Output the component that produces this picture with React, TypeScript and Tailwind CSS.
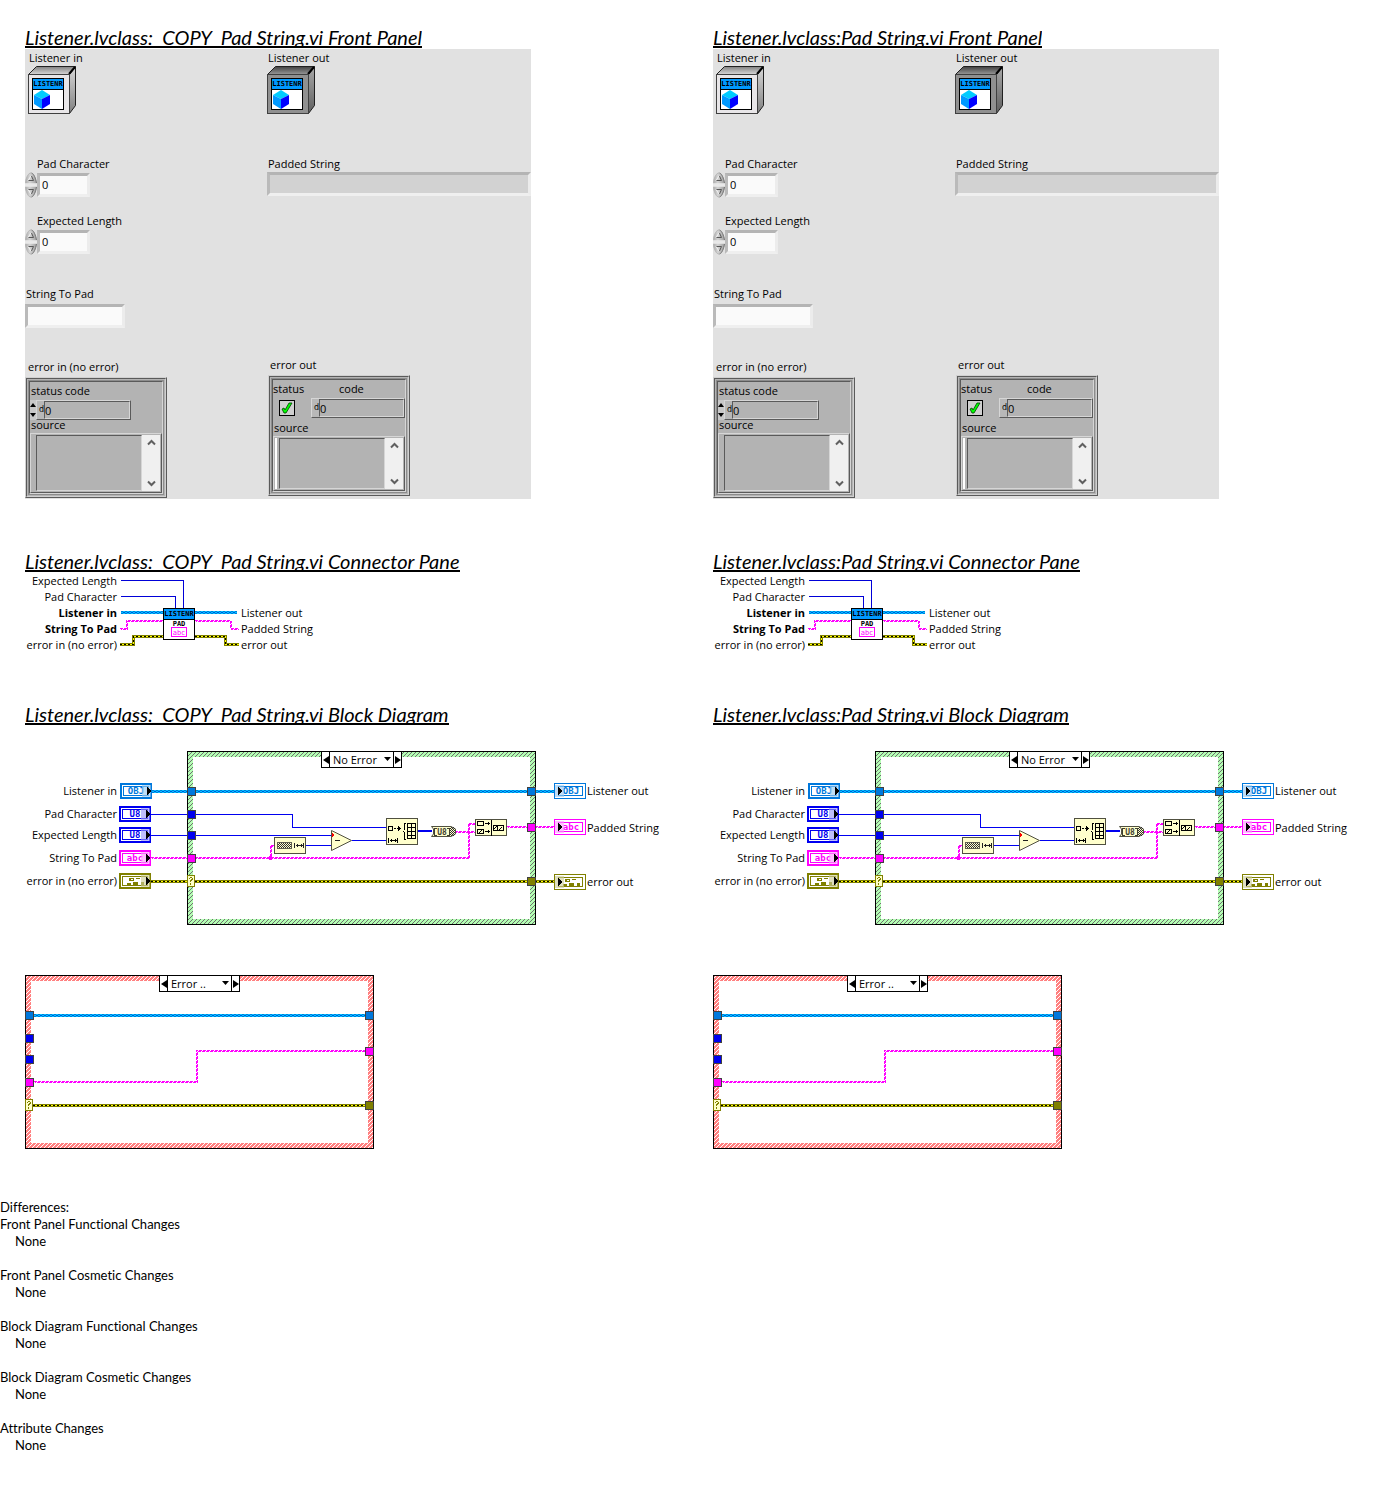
import React from "react";

const LABEL = "font-['Open_Sans',sans-serif] text-[11px] leading-4 text-black whitespace-nowrap";

function Heading({ children }: { children: string }) {
  return (
    <h2 className="flex h-[22px] w-fit items-end overflow-hidden whitespace-pre border-b-2 border-black font-[Lato,sans-serif] text-[20px] leading-[18px] italic text-black">
      {children}
    </h2>
  );
}

/* ---------- Front panel ---------- */

function Cube({ x, y }: { x: number; y: number }) {
  return (
    <g transform={`translate(${x} ${y})`}>
      <path d="M0 5L8 0L16 5L8 9Z" fill="#00ccff" />
      <path d="M0 5L8 9V19L0 14Z" fill="#0099ff" />
      <path d="M16 5L8 9V19L16 14Z" fill="#0000ff" />
    </g>
  );
}

function ClassIcon({ dark }: { dark?: boolean }) {
  const id = dark ? "box-dark" : "box-light";
  return (
    <svg width="48" height="48" viewBox="0 0 48 48" aria-hidden="true">
      <defs>
        <linearGradient id={`${id}-t`} x1="0" x2="0" y1="0" y2="1">
          <stop offset="0" stopColor={dark ? "#404040" : "#808080"} />
          <stop offset="1" stopColor={dark ? "#989898" : "#d8d8d8"} />
        </linearGradient>
        <linearGradient id={`${id}-r`} x1="0" x2="0" y1="0" y2="1">
          <stop offset="0" stopColor={dark ? "#a8a8a8" : "#d8d8d8"} />
          <stop offset="1" stopColor={dark ? "#606060" : "#808080"} />
        </linearGradient>
      </defs>
      <path d="M.5 8.500L8.500 .5H47.500L41.500 8.500Z" fill={`url(#${id}-t)`} stroke="#202020" />
      <path d="M41.500 8.500L47.500 .5V39.500L41.500 47.500Z" fill={`url(#${id}-r)`} stroke="#202020" />
      <path d="M41 8L47 1" stroke="#000" strokeWidth="2" />
      <rect x=".5" y="8.500" width="41" height="39" fill={dark ? "#909090" : "#e8e6e8"} stroke="#404040" />
      <rect x="4.500" y="12.500" width="31" height="31" fill="#fff" stroke="#000" />
      <rect x="5" y="13" width="30" height="10" fill="#0099ff" />
      <path d="M5 23.500H35" stroke="#000" />
      <text x="20" y="20" textAnchor="middle" fontFamily="DejaVu Sans Mono" fontWeight="700" fontSize="7">
        LISTENR
      </text>
      <Cube x={6} y={24} />
    </svg>
  );
}

const SUNKEN =
  "border-[3px] border-t-[#b4b4b4] border-l-[#bababa] border-r-[#ececec] border-b-[#efefef] outline-none rounded-none";

function Spinner() {
  return (
    <span className="flex w-3 shrink-0 flex-col">
      {["Increment", "Decrement"].map((name, i) => (
        <button key={name} type="button" aria-label={name} className="block h-[13px] w-3">
          <svg width="12" height="13" viewBox="0 0 12 13" className={i ? "-scale-y-100" : ""}>
            <defs>
              <linearGradient id="bean">
                <stop offset="0" stopColor="#a8a8a8" />
                <stop offset=".4" stopColor="#d4d4d4" />
                <stop offset="1" stopColor="#9c9c9c" />
              </linearGradient>
            </defs>
            <path d="M0 11.500C1 5 3.500 .5 6 .5S11 5 12 11.500Z" fill="url(#bean)" />
            <path d="M.5 11C1 5 3.500 1 6 1" fill="none" stroke="#b8b8b8" />
            <path d="M6.500 1C9 2 10.500 6 11.500 11" fill="none" stroke="#787878" />
            <path d="M3 8.500L6 4" fill="none" stroke="#f4f4f4" />
            <path d="M6.500 4L8.500 8.500H3.500" fill="none" stroke="#585858" />
            <path d="M0 12H12" stroke="#f0f0f0" />
          </svg>
        </button>
      ))}
    </span>
  );
}

function NumberControl({ id, label }: { id: string; label: string }) {
  return (
    <div>
      <label htmlFor={id} className={`${LABEL} block pl-3`}>
        {label}
      </label>
      <div className="flex items-center">
        <Spinner />
        <input id={id} defaultValue="0" className={`${LABEL} ${SUNKEN} h-6 w-[53px] bg-[#fafafa] pb-0.5 pl-0.5`} />
      </div>
    </div>
  );
}

const GROOVE = "border border-t-[#5a5a5a] border-l-[#5a5a5a] border-r-[#d6d6d6] border-b-[#d6d6d6] rounded-none";
const RIDGE = "border border-t-[#d6d6d6] border-l-[#d6d6d6] border-r-[#5a5a5a] border-b-[#5a5a5a]";

function Cluster({ children }: { children: React.ReactNode }) {
  return (
    <div className="h-[121px] w-[142px] border border-t-[#d0d0d0] border-l-[#d0d0d0] border-r-[#5a5a5a] border-b-[#5a5a5a] bg-[#b3b3b3]">
      <div className="h-full border border-t-[#5a5a5a] border-l-[#5a5a5a] border-r-[#d0d0d0] border-b-[#d0d0d0] p-px">
        <div className="h-full border border-[#8c8c8c]">
          <div className={`${GROOVE} flex h-full flex-col pt-px`}>{children}</div>
        </div>
      </div>
    </div>
  );
}

function SourceBox({ id, bar }: { id: string; bar?: boolean }) {
  return (
    <div className={`${RIDGE} flex min-h-0 flex-1 p-px`}>
      <span className={bar ? "mr-0.5 w-0.5 bg-white" : "w-1"} />
      <textarea id={id} className={`${GROOVE} min-w-0 flex-1 resize-none bg-[#b3b3b3] outline-none`} />
      <div className="flex w-[18px] flex-col items-center justify-between bg-[#f0f0f0] py-1">
        <button type="button" aria-label="Scroll up">
          <svg width="9" height="7" viewBox="0 0 9 7" className="block">
            <path d="M1 5.500L4.500 2L8 5.500" fill="none" stroke="#606060" strokeWidth="2" />
          </svg>
        </button>
        <button type="button" aria-label="Scroll down">
          <svg width="9" height="7" viewBox="0 0 9 7" className="block">
            <path d="M1 1.500L4.500 5L8 1.500" fill="none" stroke="#606060" strokeWidth="2" />
          </svg>
        </button>
      </div>
    </div>
  );
}

function CodeField({ id }: { id: string }) {
  return (
    <div className={`${RIDGE} flex h-5 min-w-0 flex-1 items-center bg-[#b8b8b8]`}>
      <span className="w-[7px] shrink-0 text-right font-['DejaVu_Sans',sans-serif] text-[8px] leading-4 text-black">d</span>
      <input id={id} defaultValue="0" className={`${LABEL} ${GROOVE} h-[18px] w-full min-w-0 bg-[#b3b3b3] outline-none`} />
    </div>
  );
}

function FrontPanel({ id }: { id: string }) {
  return (
    <section className="mt-px flex min-h-[450px] w-full max-w-[506px] bg-[#e1e1e1]">
      <div className="flex w-[242px] shrink-0 flex-col">
        <div className="pl-[3px] pt-px">
          <span className={`${LABEL} block pl-px`}>Listener in</span>
          <ClassIcon />
        </div>
        <div className="mt-[42px] flex flex-col gap-[15px]">
          <NumberControl id={`${id}-pad`} label="Pad Character" />
          <NumberControl id={`${id}-len`} label="Expected Length" />
        </div>
        <div className="mt-[31px] flex flex-col">
          <label htmlFor={`${id}-str`} className={`${LABEL} pl-px`}>
            String To Pad
          </label>
          <input id={`${id}-str`} className={`${LABEL} ${SUNKEN} mt-0.5 h-6 w-[100px] bg-[#fafafa]`} />
        </div>
        <div className="mt-[31px]">
          <span className={`${LABEL} block pb-0.5 pl-[3px]`}>error in (no error)</span>
          <Cluster>
            <span className={`${LABEL} pl-px`}>status code</span>
            <div className="mt-px flex w-[101px]">
              <span className="flex w-1.5 flex-col justify-center gap-1 bg-[#c8c8c8]">
                <button type="button" aria-label="Increase code">
                  <svg width="6" height="5" viewBox="0 0 6 5" className="block">
                    <path d="M3 0L6 4H0Z" />
                  </svg>
                </button>
                <button type="button" aria-label="Decrease code">
                  <svg width="6" height="5" viewBox="0 0 6 5" className="block">
                    <path d="M3 5L6 1H0Z" />
                  </svg>
                </button>
              </span>
              <CodeField id={`${id}-code-in`} />
            </div>
            <label htmlFor={`${id}-src-in`} className={`${LABEL} -mt-[3px] h-4 pl-px`}>
              source
            </label>
            <SourceBox id={`${id}-src-in`} />
          </Cluster>
        </div>
      </div>
      <div className="flex min-w-0 flex-1 flex-col">
        <div className="pt-px">
          <span className={`${LABEL} block pl-px`}>Listener out</span>
          <ClassIcon dark />
        </div>
        <div className="mt-[42px] flex flex-col">
          <label htmlFor={`${id}-out`} className={`${LABEL} pl-px`}>
            Padded String
          </label>
          <input id={`${id}-out`} readOnly className={`${LABEL} ${SUNKEN} h-6 w-full bg-[#d2d2d2]`} />
        </div>
        <div className="mt-[161px] pl-px">
          <span className={`${LABEL} block pb-0.5 pl-0.5`}>error out</span>
          <Cluster>
            <div className="flex">
              <label htmlFor={`${id}-status`} className={`${LABEL} w-[66px]`}>
                status
              </label>
              <label htmlFor={`${id}-code-out`} className={LABEL}>
                code
              </label>
            </div>
            <div className="mt-px flex items-center gap-4 pl-1.5">
              <span className="relative h-4 w-4 shrink-0">
                <input
                  id={`${id}-status`}
                  type="checkbox"
                  defaultChecked
                  className="block h-4 w-4 appearance-none border border-black bg-[#d0d0d0]"
                />
                <svg width="16" height="16" viewBox="0 0 16 16" className="pointer-events-none absolute inset-0">
                  <path d="M3 9L5 8L6 10L10 3H13L7 13H5Z" fill="#00ff00" stroke="#003c00" strokeWidth=".8" />
                </svg>
              </span>
              <CodeField id={`${id}-code-out`} />
            </div>
            <label htmlFor={`${id}-src-out`} className={`${LABEL} mt-0.5 pl-px`}>
              source
            </label>
            <SourceBox id={`${id}-src-out`} bar />
          </Cluster>
        </div>
      </div>
    </section>
  );
}

/* ---------- Wires ---------- */

function ObjWire({ d }: { d: string }) {
  return (
    <g fill="none">
      <path d={d} stroke="#00c8ff" strokeWidth="3" />
      <path d={d} stroke="#0078dc" strokeWidth="3" strokeDasharray="2 2" />
      <path d={d} stroke="#00c8ff" strokeWidth="1" strokeDasharray="2 2" />
      <path d={d} stroke="#0050e0" strokeWidth="1" strokeDasharray="2 2" strokeDashoffset="2" />
    </g>
  );
}

function StrWire({ d }: { d: string }) {
  return (
    <g fill="none" stroke="#ff00ff">
      <path d={d} strokeDasharray="3 1" />
      <path d={d} strokeDasharray="3 1" strokeDashoffset="2" transform="translate(1 1)" />
    </g>
  );
}

function ErrWire({ d }: { d: string }) {
  return (
    <g fill="none">
      <path d={d} stroke="#808000" strokeWidth="3" />
      <path d={d} stroke="#ffff00" />
      <path d={d} stroke="#000" strokeDasharray="2 2" />
    </g>
  );
}

/* ---------- Connector pane ---------- */

function ConnectorPane() {
  return (
    <section className="mt-px flex">
      <ul className={`${LABEL} w-[92px] text-right`}>
        <li>Expected Length</li>
        <li>Pad Character</li>
        <li className="font-bold">Listener in</li>
        <li className="font-bold">String To Pad</li>
        <li>error in (no error)</li>
      </ul>
      <svg width="124" height="80" viewBox="117 573 124 80" shapeRendering="crispEdges" aria-hidden="true">
        <g fill="none" stroke="#0000d8">
          <path d="M121 580.500H183.500V608" />
          <path d="M121 596.500H175.500V608" />
        </g>
        <ObjWire d="M121 612.500H163M195 612.500H237" />
        <StrWire d="M120 628.500H126.500V620.500H163M195 620.500H230.500V628.500H238" />
        <ErrWire d="M120 644.500H133.500V636.500H163M195 636.500H225.500V644.500H239" />
        <rect x="163.500" y="608.500" width="31" height="31" fill="#fff" stroke="#000" />
        <rect x="164" y="609" width="30" height="10" fill="#0099ff" />
        <path d="M164 619.500H194" stroke="#000" />
        <g fontFamily="DejaVu Sans Mono" fontWeight="700" fontSize="7" textAnchor="middle">
          <text x="179" y="616">LISTENR</text>
          <text x="179" y="626">PAD</text>
        </g>
        <rect x="171.500" y="627.500" width="15" height="9" fill="#fff" stroke="#ff00ff" />
        <text x="179" y="635" textAnchor="middle" fontFamily="DejaVu Sans Mono" fontSize="7" fill="#ff00ff">
          abc
        </text>
      </svg>
      <ul className={`${LABEL} pt-8`}>
        <li>Listener out</li>
        <li>Padded String</li>
        <li>error out</li>
      </ul>
    </section>
  );
}

/* ---------- Block diagram ---------- */

type Kind = "OBJ" | "U8" | "abc" | "err";
const COLOR: Record<Kind, string> = { OBJ: "#0078dc", U8: "#0000f0", abc: "#ff00ff", err: "#808000" };

function ErrGlyph({ x, y, c }: { x: number; y: number; c: string }) {
  return (
    <g transform={`translate(${x} ${y})`} fill={c}>
      <path d="M2 0H7V3H2ZM9 0H13V1H9ZM0 5H4V7H0ZM6 4H11V7H6ZM14 4H17V7H14Z" />
      <path d="M4 1H6V2H4Z" fill="#fff" />
    </g>
  );
}

function Terminal({ x, y, kind, out }: { x: number; y: number; kind: Kind; out?: boolean }) {
  const c = COLOR[kind];
  return (
    <g transform={`translate(${x} ${y})`}>
      <rect width="32" height="16" fill={c} />
      {out ? <rect x="1" y="1" width="30" height="14" fill="#fff" /> : <rect x="2" y="2" width="28" height="12" fill="#fff" />}
      <rect x={out ? 4.5 : 3.5} y="3.500" width={out ? 24 : 25} height="9" fill="#fff" stroke={c} />
      {kind === "err" ? (
        <ErrGlyph x={out ? 9 : 8} y={5} c={c} />
      ) : (
        <text
          x={out ? 17 : 16}
          y="11"
          textAnchor="middle"
          fontFamily="DejaVu Sans Mono"
          fontWeight="700"
          fontSize="9"
          fill={c}
        >
          {kind}
        </text>
      )}
      <rect x={out ? 1 : 22} y="2" width="9" height="12" fill="#fff" opacity=".5" />
      <rect x={out ? 1 : 22} y="2" width="9" height="12" fill={c} opacity=".25" />
      <path d={out ? "M4 4L8 8L4 12Z" : "M27 4L31 8L27 12Z"} fill="#000" />
    </g>
  );
}

function Tunnel({ x, y, kind }: { x: number; y: number; kind: Kind }) {
  return <rect x={x + 0.5} y={y + 0.5} width="8" height="8" fill={COLOR[kind]} stroke="#404040" />;
}

function Selector({ x, y }: { x: number; y: number }) {
  return (
    <g transform={`translate(${x} ${y})`}>
      <rect x=".5" y=".5" width="7" height="11" fill="#ffffc8" stroke="#808000" />
      <path d="M2 4V3H3V2H5V3H6V5H5V6H4V7H3V5H4V4H5V3H3V4ZM3 8H4V10H3Z" fill="#808000" />
    </g>
  );
}

function Hatch({ id, base, line }: { id: string; base: string; line: string }) {
  return (
    <pattern id={id} width="4" height="4" patternUnits="userSpaceOnUse">
      <rect width="4" height="4" fill={base} />
      <path d="M0 3H1V4H0ZM1 2H2V3H1ZM2 1H3V2H2ZM3 0H4V1H3Z" fill={line} />
    </pattern>
  );
}

function Frame({ x, y, hatch }: { x: number; y: number; hatch: string }) {
  return (
    <g>
      <rect x={x} y={y} width="349" height="174" fill="#000" />
      <rect x={x + 1} y={y + 1} width="347" height="172" fill={`url(#${hatch})`} />
      <rect x={x + 6} y={y + 6} width="337" height="162" fill="#fff" />
    </g>
  );
}

function CaseSelector({ value }: { value: string }) {
  const other = value === "No Error" ? "Error .." : "No Error";
  return (
    <div className="relative flex h-[17px] w-[81px] border border-black bg-white">
      <button type="button" aria-label="Previous case" className="flex w-2 items-center justify-center border-r border-black">
        <svg width="6" height="8" viewBox="0 0 6 8">
          <path d="M6 0V8L0 4Z" />
        </svg>
      </button>
      <select
        aria-label="Case"
        defaultValue={value}
        className={`${LABEL} h-[15px] min-w-0 flex-1 appearance-none bg-white pl-[3px] outline-none`}
      >
        <option>{value}</option>
        <option>{other}</option>
      </select>
      <svg width="7" height="4" viewBox="0 0 7 4" className="pointer-events-none absolute top-[5px] right-2.5">
        <path d="M0 0H7L3.500 4Z" />
      </svg>
      <button type="button" aria-label="Next case" className="flex w-2 items-center justify-center border-l border-black">
        <svg width="6" height="8" viewBox="0 0 6 8">
          <path d="M0 0V8L6 4Z" />
        </svg>
      </button>
    </div>
  );
}

const NODE = { fill: "#ffffcc", stroke: "#505040" };
const DIM = "M0 0V5M1 2.500H8M8.500 0V5M2.500 1V4M6.500 1V4";

function NoErrorCase() {
  return (
    <div className="relative mt-[26px]">
      <svg width="640" height="174" viewBox="25 751 640 174" className="block" shapeRendering="crispEdges">
        <defs>
          <Hatch id="hatch-green" base="#b4ffb4" line="#707070" />
          <pattern id="dither" width="2" height="2" patternUnits="userSpaceOnUse">
            <path d="M0 0H1V1H0ZM1 1H2V2H1Z" fill="#303030" />
          </pattern>
        </defs>
        <Frame x={187} y={751} hatch="hatch-green" />

        <ObjWire d="M152 791.500H554" />
        <g fill="none" stroke="#0000f0">
          <path d="M151 814.500H292.500V827.500H386" />
          <path d="M151 835.500H331" />
          <path d="M306 845.500H331" />
          <path d="M352 840.500H386" />
          <path d="M418 831H432" strokeWidth="2" />
        </g>
        <StrWire d="M151 857.500H468.500V823.500H475" />
        <StrWire d="M270.500 857V845.500H274" />
        <path d="M268 857H269V856H272V857H273V859H272V860H269V859H268Z" fill="#ff00ff" />
        <StrWire d="M455 831.500H475" />
        <StrWire d="M507 826.500H554" />
        <ErrWire d="M151 881.500H554" />

        <rect x="274.500" y="837.500" width="31" height="16" {...NODE} />
        <rect x="277.500" y="842.500" width="14" height="6" fill="url(#dither)" stroke="#606050" />
        <path d={DIM} transform="translate(294.500 843)" fill="none" stroke="#202020" />

        <path d="M331.500 830.500L351.500 840.500L331.500 850.500Z" shapeRendering="auto" {...NODE} />
        <path d="M335 840.500H340" stroke="#202020" />
        <path d="M332 833L334 835L332 837Z" fill="#ff0000" />

        <rect x="386.500" y="818.500" width="31" height="26" {...NODE} />
        <g fill="none" stroke="#000">
          <rect x="388.500" y="826.500" width="4" height="4" />
          <path d="M394 828.500H396M397 828.500H401M398.500 826V831M399.500 827V830" />
          <path d={DIM} transform="translate(388.500 838)" />
          <path d="M406 823.500H404.500V830M403 831.500H404M404.500 832V839.500H406" />
          <path d="M407.500 823.500H415.500V838.500H407.500ZM411.500 823V839M407 827.500H416M407 831.500H416M407 835.500H416" />
        </g>

        <path d="M431.500 826.500H451L455.500 829V834L451 836.500H431.500L433.500 834V829Z" shapeRendering="auto" {...NODE} />
        <path d="M450 827H453L455 829V834L453 836H450Z" fill="url(#dither)" />
        <path d="M437 828.500H434.500V835.500H437M447 828.500H449.500V835.500H447" fill="none" stroke="#404030" />
        <text x="442" y="835" textAnchor="middle" fontFamily="DejaVu Sans Mono" fontWeight="700" fontSize="8" fill="#404030">
          U8
        </text>

        <rect x="475.500" y="819.500" width="31" height="16" {...NODE} />
        <g fill="none" stroke="#000">
          <path d="M491.500 820V836" />
          <rect x="477.500" y="821.500" width="6" height="4" />
          <rect x="477.500" y="829.500" width="6" height="4" />
          <path d="M479 833L483 829M485 823.500H490M488.500 822V825M485 831.500H490M488.500 830V833" />
          <path d="M493.500 825.500H503.500V830.500H493.500ZM497.500 825V831M499 830L502 827M494 829L497 826" />
        </g>

        <Tunnel x={187} y={787} kind="OBJ" />
        <Tunnel x={187} y={810} kind="U8" />
        <Tunnel x={187} y={831} kind="U8" />
        <Tunnel x={187} y={854} kind="abc" />
        <Selector x={187} y={875} />
        <Tunnel x={527} y={787} kind="OBJ" />
        <Tunnel x={527} y={823} kind="abc" />
        <Tunnel x={527} y={877} kind="err" />

        <Terminal x={120} y={783} kind="OBJ" />
        <Terminal x={119} y={806} kind="U8" />
        <Terminal x={119} y={827} kind="U8" />
        <Terminal x={119} y={850} kind="abc" />
        <Terminal x={119} y={873} kind="err" />
        <Terminal x={554} y={783} kind="OBJ" out />
        <Terminal x={554} y={819} kind="abc" out />
        <Terminal x={554} y={874} kind="err" out />

        <g fontFamily="Open Sans" fontSize="11" textAnchor="end">
          <text x="117" y="795">Listener in</text>
          <text x="117" y="818">Pad Character</text>
          <text x="117" y="839">Expected Length</text>
          <text x="117" y="862">String To Pad</text>
          <text x="117" y="885">error in (no error)</text>
        </g>
        <g fontFamily="Open Sans" fontSize="11">
          <text x="587" y="795">Listener out</text>
          <text x="587" y="832">Padded String</text>
          <text x="587" y="886">error out</text>
        </g>
      </svg>
      <div className="absolute top-0 left-[296px]">
        <CaseSelector value="No Error" />
      </div>
    </div>
  );
}

function ErrorCase() {
  return (
    <div className="relative mt-[50px]">
      <svg width="349" height="174" viewBox="25 975 349 174" className="block" shapeRendering="crispEdges">
        <defs>
          <Hatch id="hatch-red" base="#ff8080" line="#ffffff" />
        </defs>
        <Frame x={25} y={975} hatch="hatch-red" />
        <ObjWire d="M34 1015.500H365" />
        <StrWire d="M34 1081.500H196.500V1050.500H365" />
        <ErrWire d="M33 1105.500H365" />
        <Tunnel x={25} y={1011} kind="OBJ" />
        <Tunnel x={25} y={1034} kind="U8" />
        <Tunnel x={25} y={1055} kind="U8" />
        <Tunnel x={25} y={1078} kind="abc" />
        <Selector x={25} y={1099} />
        <Tunnel x={365} y={1011} kind="OBJ" />
        <Tunnel x={365} y={1047} kind="abc" />
        <Tunnel x={365} y={1101} kind="err" />
      </svg>
      <div className="absolute top-0 left-[134px]">
        <CaseSelector value="Error .." />
      </div>
    </div>
  );
}

function Report({ id, title }: { id: string; title: string }) {
  return (
    <article className="min-w-0 pl-[25px]">
      <Heading>{`${title} Front Panel`}</Heading>
      <FrontPanel id={id} />
      <div className="mt-[51px]">
        <Heading>{`${title} Connector Pane`}</Heading>
      </div>
      <ConnectorPane />
      <div className="mt-[50px]">
        <Heading>{`${title} Block Diagram`}</Heading>
      </div>
      <NoErrorCase />
      <ErrorCase />
    </article>
  );
}

const CHANGES = [
  "Front Panel Functional Changes",
  "Front Panel Cosmetic Changes",
  "Block Diagram Functional Changes",
  "Block Diagram Cosmetic Changes",
  "Attribute Changes",
];

export default function App() {
  return (
    <main className="min-h-screen bg-white pt-[26px] pb-8 text-black">
      <div className="grid grid-cols-2">
        <Report id="copy" title="Listener.lvclass:  COPY  Pad String.vi" />
        <Report id="orig" title="Listener.lvclass:Pad String.vi" />
      </div>
      <section className="mt-[50px] font-[Lato,sans-serif] text-[13px] leading-[17px] [font-variant-ligatures:none]">
        <h3>Differences:</h3>
        <dl className="flex flex-col gap-[17px]">
          {CHANGES.map((name) => (
            <div key={name}>
              <dt>{name}</dt>
              <dd className="pl-[15px]">None</dd>
            </div>
          ))}
        </dl>
      </section>
    </main>
  );
}
